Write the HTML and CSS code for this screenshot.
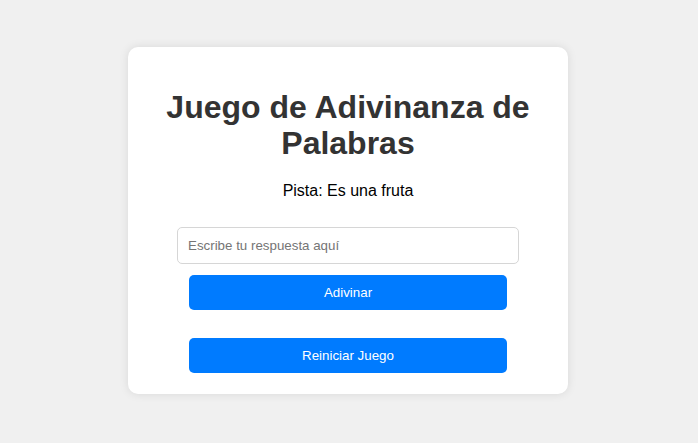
FILE: index.html
```html
<!DOCTYPE html>
<html lang="es">
<head>
<meta charset="UTF-8">
<title>Juego de Adivinanza de Palabras</title>
<link rel="stylesheet" href="styles.css">
</head>
<body>
<div class="container">
  <h1 class="title">Juego de Adivinanza de Palabras</h1>
  <p class="hint">Pista: Es una fruta</p>
  <input class="answer" type="text" placeholder="Escribe tu respuesta aquí">
  <button class="btn btn-guess">Adivinar</button>
  <button class="btn btn-reset">Reiniciar Juego</button>
</div>
</body>
</html>
```
FILE: styles.css
```css
html, body {
  margin: 0;
  padding: 0;
}
body {
  font-family: "Liberation Sans", Arial, sans-serif;
  background: #f0f0f0;
  min-height: 100vh;
  box-sizing: border-box;
  padding: 0 2px 2px 0;
  display: flex;
  justify-content: center;
  align-items: center;
}
.container {
  width: 400px;
  background: #fff;
  padding: 20px 20px 21px;
  border-radius: 10px;
  box-shadow: 0 0 10px rgba(0, 0, 0, 0.1);
  text-align: center;
}
.title {
  font-size: 32px;
  line-height: 36px;
  color: #333;
  margin: 22px 0 21px;
}
.hint {
  font-size: 16px;
  color: #000;
  margin: 0 0 27px;
}
.answer {
  display: block;
  box-sizing: border-box;
  width: 342px;
  height: 37px;
  margin: 0 auto 11px;
  padding: 10px;
  font-family: "Liberation Sans", Arial, sans-serif;
  font-size: 13.333px;
  border: 1px solid #d6d6d6;
  border-radius: 5px;
  outline: none;
}
.answer::placeholder {
  color: #757575;
}
.btn {
  display: block;
  width: 318px;
  height: 35px;
  margin: 0 auto;
  padding: 0;
  border: none;
  border-radius: 5px;
  background: #007bff;
  color: #fff;
  font-family: "Liberation Sans", Arial, sans-serif;
  font-size: 13.333px;
  cursor: pointer;
}
.btn-reset {
  margin-top: 28px;
}
```
